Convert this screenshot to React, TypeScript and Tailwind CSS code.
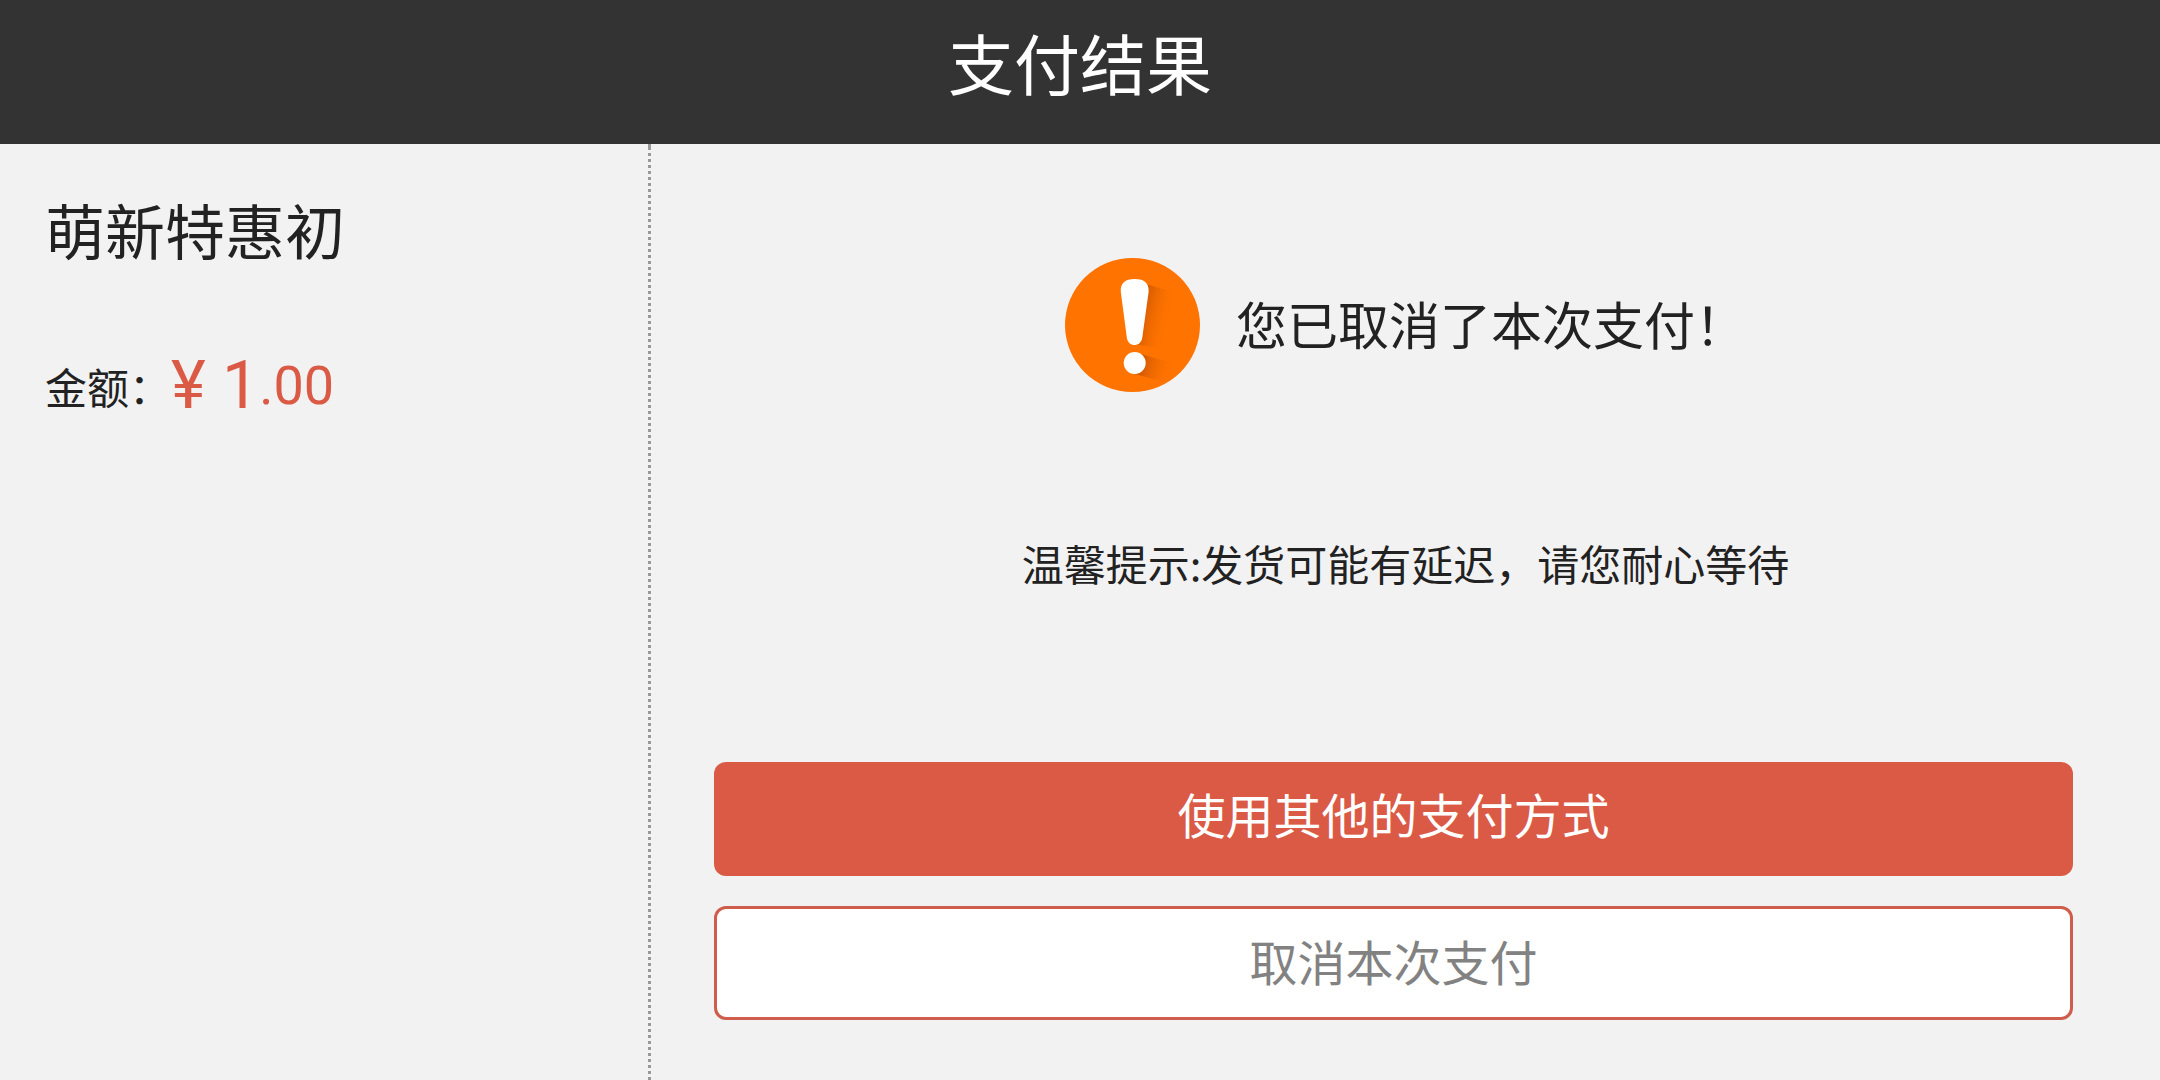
const order = {
    name: "萌新特惠初",
    currency: "¥",
    integer: "1",
    decimal: ".00",
};

function WarningIcon() {
    return (
        <svg className="h-[134px] w-[135px] shrink-0" viewBox="0 0 135 134" aria-hidden="true">
            <defs>
                <linearGradient id="barShade" gradientUnits="userSpaceOnUse" x1="76" y1="50" x2="106" y2="57">
                    <stop offset="0" stopColor="#cf5700" />
                    <stop offset="1" stopColor="#ff7300" stopOpacity="0" />
                </linearGradient>
                <linearGradient id="dotShade" gradientUnits="userSpaceOnUse" x1="74" y1="104" x2="108" y2="113">
                    <stop offset="0" stopColor="#c95400" />
                    <stop offset="1" stopColor="#ff7300" stopOpacity="0" />
                </linearGradient>
            </defs>
            <ellipse cx="67.5" cy="67" rx="67.5" ry="67" fill="#ff7300" />
            <path d="M81 26 L112 35 L102 92 L70 86 Z" fill="url(#barShade)" />
            <path d="M76 96 L110 106 L102 125 L70 116 Z" fill="url(#dotShade)" />
            <path
                d="M55.8 34 C55.2 25 60 21 69.7 21 C79.4 21 84.2 25 83.6 34 L77.3 79.5 C76 89.5 63 89.5 61.8 79.5 Z"
                fill="#fff"
            />
            <circle cx="69.7" cy="105" r="11" fill="#fff" />
        </svg>
    );
}

export default function App() {
    return (
        <div className="flex min-h-screen flex-col bg-[#f2f2f2] font-['Noto_Sans_CJK_SC',sans-serif] text-[#222]" lang="zh-CN">
            <header className="flex h-36 items-center justify-center bg-[#333] pb-[22px]">
                <h1 className="text-[66px] leading-[96px] text-white">支付结果</h1>
            </header>
            <div className="flex flex-1">
                <section className="w-[30%] px-[45px] pt-10">
                    <h2 className="text-[60px] leading-[90px]">{order.name}</h2>
                    <p className="mt-[67px] flex items-center text-[42px] leading-[90px]">
                        <span>金额：</span>
                        <span className="whitespace-pre font-[Roboto,sans-serif] text-[66px] text-[#db5a46]">{order.currency} {order.integer}</span>
                        <span className="font-[Roboto,sans-serif] text-[54px] text-[#db5a46]">{order.decimal}</span>
                    </p>
                </section>
                <div className="w-[3px] border-t-3 border-[#999] bg-[repeating-linear-gradient(to_bottom,#999_0px,#999_3px,transparent_3px,transparent_6px)]"></div>
                <main className="flex flex-1 flex-col pt-[114px]">
                    <div className="flex items-center justify-center gap-9">
                        <WarningIcon />
                        <p className="pb-1 text-[51px] leading-[75px]">您已取消了本次支付！</p>
                    </div>
                    <p className="mt-[141px] text-center text-[42px] leading-[60px]">温馨提示:发货可能有延迟，请您耐心等待</p>
                    <div className="mt-[169px] flex flex-col gap-[30px] pr-[87px] pl-[63px]">
                        <button className="flex h-[114px] items-center justify-center rounded-xl bg-[#db5a46] pb-3 text-[48px] leading-[72px] text-white">
                            使用其他的支付方式
                        </button>
                        <button className="flex h-[114px] items-center justify-center rounded-xl border-3 border-[#cf5d4c] bg-white pb-1.5 text-[48px] leading-[72px] text-[#828282]">
                            取消本次支付
                        </button>
                    </div>
                </main>
            </div>
        </div>
    );
}
